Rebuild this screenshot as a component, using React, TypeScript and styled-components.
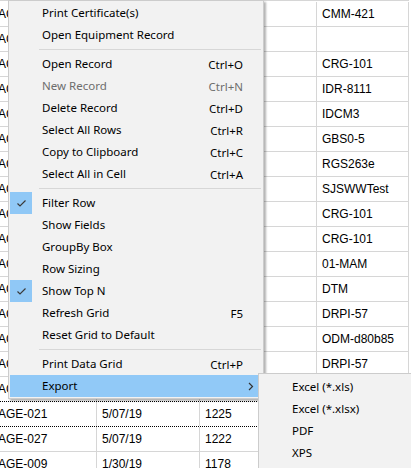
import React from "react";
import styled, { createGlobalStyle } from "styled-components";

const Global = createGlobalStyle`
  html, body { margin: 0; padding: 0; background: #ffffff; overflow: hidden; }
  #root { width: 411px; height: 468px; }
`;

const Frame = styled.div`
  position: relative;
  width: 411px;
  height: 468px;
  overflow: hidden;
  background: #ffffff;
`;

const Grid = styled.div`
  margin-left: -7px;
  padding-top: 1px;
  border-top: 1px solid #d6d6d6;
  width: 416px;
  font-family: "Liberation Sans", Arial, sans-serif;
  font-size: 12px;
  color: #000;
`;

const Row = styled.div<{ $dotted?: boolean }>`
  display: grid;
  grid-template-columns: 104px 103px 117px 1fr;
  height: 24px;
  border-bottom: 1px ${(p) => (p.$dotted ? "dotted #000" : "solid #d6d6d6")};
`;

const Cell = styled.div`
  display: flex;
  align-items: center;
  padding-left: 5px;
  border-right: 1px solid #d6d6d6;
  white-space: nowrap;
  overflow: hidden;
`;

const Menu = styled.div`
  position: absolute;
  left: 8px;
  top: 0;
  background: #f2f2f2;
  border: 1px solid #cccccc;
  padding: 1px;
  box-sizing: content-box;
  box-shadow: 2px 2px 2px rgba(0, 0, 0, 0.3);
  font-family: "Noto Sans", "Open Sans", sans-serif;
  font-size: 11.5px;
  display: flex;
  flex-direction: column;
  width: 252px;
`;

const SubMenu = styled(Menu)`
  left: 258px;
  top: 373px;
  padding-top: 2px;
  width: 200px;
  height: 120px;
`;

const Item = styled.div<{ $disabled?: boolean; $hot?: boolean }>`
  display: grid;
  grid-template-columns: 22px 1fr auto 19px;
  column-gap: 10px;
  align-items: center;
  height: 22px;
  background: ${(p) => (p.$hot ? "#91c9f7" : "transparent")};
  color: ${(p) => (p.$disabled ? "#6d6d6d" : "#000")};
  white-space: nowrap;
`;

const SubItem = styled(Item)`
  grid-template-columns: 22px 1fr;
`;

const CheckBox = styled.div<{ $on?: boolean }>`
  width: 22px;
  height: 22px;
  display: flex;
  align-items: center;
  justify-content: center;
  background: ${(p) => (p.$on ? "#90c8f6" : "transparent")};
`;

const Label = styled.span`
  line-height: 22px;
`;

const Shortcut = styled.span`
  text-align: right;
  margin-right: -10px;
`;

const Arrow = styled.span`
  display: flex;
  align-items: center;
  justify-content: flex-start;
  padding-left: 5px;
`;

const Separator = styled.div`
  height: 1px;
  background: #d7d7d7;
  margin: 3px 1px 3px 29px;
`;

const Check = () => (
  <svg width="11" height="9" viewBox="0 0 11 9">
    <polyline points="1.5,4.5 4,7 9.5,1.5" fill="none" stroke="#3a3a3a" strokeWidth="1.2" />
  </svg>
);

const Chevron = () => (
  <svg width="6" height="9" viewBox="0 0 6 9">
    <polyline points="1,1 4.5,4.5 1,8" fill="none" stroke="#333" strokeWidth="1.2" />
  </svg>
);

type Entry =
  | { sep: true }
  | { sep?: false; label: string; shortcut?: string; disabled?: boolean; checked?: boolean; hot?: boolean; sub?: boolean };

const entries: Entry[] = [
  { label: "Print Certificate(s)" },
  { label: "Open Equipment Record" },
  { sep: true },
  { label: "Open Record", shortcut: "Ctrl+O" },
  { label: "New Record", shortcut: "Ctrl+N", disabled: true },
  { label: "Delete Record", shortcut: "Ctrl+D" },
  { label: "Select All Rows", shortcut: "Ctrl+R" },
  { label: "Copy to Clipboard", shortcut: "Ctrl+C" },
  { label: "Select All in Cell", shortcut: "Ctrl+A" },
  { sep: true },
  { label: "Filter Row", checked: true },
  { label: "Show Fields" },
  { label: "GroupBy Box" },
  { label: "Row Sizing" },
  { label: "Show Top N", checked: true },
  { label: "Refresh Grid", shortcut: "F5" },
  { label: "Reset Grid to Default" },
  { sep: true },
  { label: "Print Data Grid", shortcut: "Ctrl+P" },
  { label: "Export", hot: true, sub: true },
];

const subEntries = ["Excel (*.xls)", "Excel (*.xlsx)", "PDF", "XPS"];

const rows: [string, string, string, string][] = [
  ["AGE-001", "3/12/19", "1201", "CMM-421"],
  ["AGE-002", "3/12/19", "1202", ""],
  ["AGE-003", "3/14/19", "1203", "CRG-101"],
  ["AGE-004", "3/14/19", "1204", "IDR-8111"],
  ["AGE-005", "3/18/19", "1205", "IDCM3"],
  ["AGE-006", "3/18/19", "1206", "GBS0-5"],
  ["AGE-007", "3/20/19", "1207", "RGS263e"],
  ["AGE-008", "3/21/19", "1208", "SJSWWTest"],
  ["AGE-010", "3/25/19", "1210", "CRG-101"],
  ["AGE-011", "3/25/19", "1211", "CRG-101"],
  ["AGE-012", "4/02/19", "1212", "01-MAM"],
  ["AGE-013", "4/02/19", "1213", "DTM"],
  ["AGE-014", "4/09/19", "1214", "DRPI-57"],
  ["AGE-015", "4/11/19", "1215", "ODM-d80b85"],
  ["AGE-016", "4/15/19", "1216", "DRPI-57"],
  ["AGE-018", "4/22/19", "1219", "CRG-101"],
  ["AGE-021", "5/07/19", "1225", "IDCM3"],
  ["AGE-027", "5/07/19", "1222", "GBS0-5"],
  ["AGE-009", "1/30/19", "1178", "DTM"],
];

export default function App() {
  return (
    <>
      <Global />
      <Frame>
        <Grid>
          {rows.map((r, i) => (
            <Row key={i} $dotted={i === 15 || i === 16}>
              {r.map((c, j) => (
                <Cell key={j}>{c}</Cell>
              ))}
            </Row>
          ))}
        </Grid>
        <Menu>
          {entries.map((e, i) =>
            e.sep ? (
              <Separator key={i} />
            ) : (
              <Item key={i} $disabled={e.disabled} $hot={e.hot}>
                <CheckBox $on={e.checked}>{e.checked ? <Check /> : null}</CheckBox>
                <Label>{e.label}</Label>
                <Shortcut>{e.shortcut ?? ""}</Shortcut>
                <Arrow>{e.sub ? <Chevron /> : null}</Arrow>
              </Item>
            )
          )}
        </Menu>
        <SubMenu>
          {subEntries.map((s) => (
            <SubItem key={s}>
              <CheckBox />
              <Label>{s}</Label>
            </SubItem>
          ))}
        </SubMenu>
      </Frame>
    </>
  );
}
